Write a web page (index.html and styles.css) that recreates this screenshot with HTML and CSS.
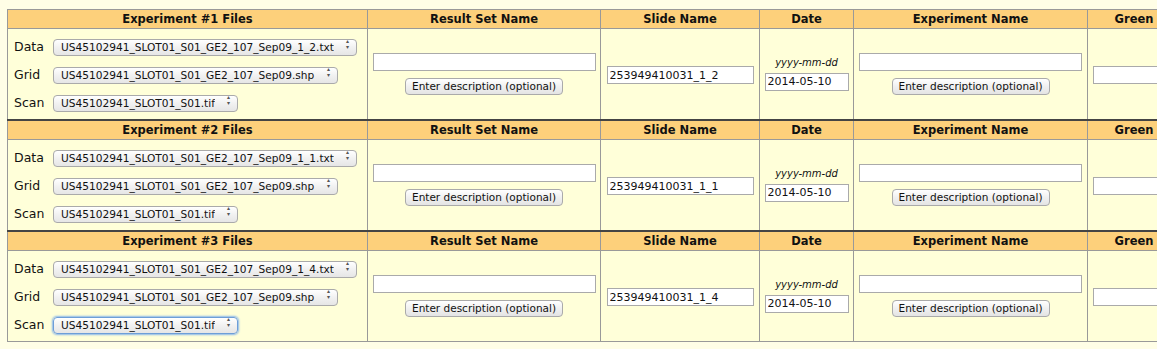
FILE: index.html
```html
<!DOCTYPE html>
<html lang="en">
<head>
  <meta charset="UTF-8">
  <title>Experiment Files</title>
  <link rel="stylesheet" href="styles.css">
</head>
<body>
  <table class="experiments">
    <colgroup>
      <col class="c-files">
      <col class="c-result">
      <col class="c-slide">
      <col class="c-date">
      <col class="c-name">
      <col class="c-green">
    </colgroup>

    <tbody class="group">
      <tr class="head">
        <th>Experiment #1 Files</th>
        <th>Result Set Name</th>
        <th>Slide Name</th>
        <th>Date</th>
        <th>Experiment Name</th>
        <th>Green</th>
      </tr>
      <tr class="body">
        <td class="files">
          <div class="file-row"><label>Data</label><span class="popup"><select><option>US45102941_SLOT01_S01_GE2_107_Sep09_1_2.txt</option></select></span></div>
          <div class="file-row"><label>Grid</label><span class="popup"><select><option>US45102941_SLOT01_S01_GE2_107_Sep09.shp</option></select></span></div>
          <div class="file-row"><label>Scan</label><span class="popup"><select><option>US45102941_SLOT01_S01.tif</option></select></span></div>
        </td>
        <td class="center">
          <input type="text" class="wide">
          <button>Enter description (optional)</button>
        </td>
        <td class="center"><input type="text" class="slide" value="253949410031_1_2"></td>
        <td class="center">
          <div class="hint">yyyy-mm-dd</div>
          <input type="text" class="date" value="2014-05-10">
        </td>
        <td class="center">
          <input type="text" class="wide">
          <button>Enter description (optional)</button>
        </td>
        <td class="green"><input type="text" class="date"></td>
      </tr>
    </tbody>

    <tbody class="group">
      <tr class="head">
        <th>Experiment #2 Files</th>
        <th>Result Set Name</th>
        <th>Slide Name</th>
        <th>Date</th>
        <th>Experiment Name</th>
        <th>Green</th>
      </tr>
      <tr class="body">
        <td class="files">
          <div class="file-row"><label>Data</label><span class="popup"><select><option>US45102941_SLOT01_S01_GE2_107_Sep09_1_1.txt</option></select></span></div>
          <div class="file-row"><label>Grid</label><span class="popup"><select><option>US45102941_SLOT01_S01_GE2_107_Sep09.shp</option></select></span></div>
          <div class="file-row"><label>Scan</label><span class="popup"><select><option>US45102941_SLOT01_S01.tif</option></select></span></div>
        </td>
        <td class="center">
          <input type="text" class="wide">
          <button>Enter description (optional)</button>
        </td>
        <td class="center"><input type="text" class="slide" value="253949410031_1_1"></td>
        <td class="center">
          <div class="hint">yyyy-mm-dd</div>
          <input type="text" class="date" value="2014-05-10">
        </td>
        <td class="center">
          <input type="text" class="wide">
          <button>Enter description (optional)</button>
        </td>
        <td class="green"><input type="text" class="date"></td>
      </tr>
    </tbody>

    <tbody class="group">
      <tr class="head">
        <th>Experiment #3 Files</th>
        <th>Result Set Name</th>
        <th>Slide Name</th>
        <th>Date</th>
        <th>Experiment Name</th>
        <th>Green</th>
      </tr>
      <tr class="body">
        <td class="files">
          <div class="file-row"><label>Data</label><span class="popup"><select><option>US45102941_SLOT01_S01_GE2_107_Sep09_1_4.txt</option></select></span></div>
          <div class="file-row"><label>Grid</label><span class="popup"><select><option>US45102941_SLOT01_S01_GE2_107_Sep09.shp</option></select></span></div>
          <div class="file-row"><label>Scan</label><span class="popup focused"><select><option>US45102941_SLOT01_S01.tif</option></select></span></div>
        </td>
        <td class="center">
          <input type="text" class="wide">
          <button>Enter description (optional)</button>
        </td>
        <td class="center"><input type="text" class="slide" value="253949410031_1_4"></td>
        <td class="center">
          <div class="hint">yyyy-mm-dd</div>
          <input type="text" class="date" value="2014-05-10">
        </td>
        <td class="center">
          <input type="text" class="wide">
          <button>Enter description (optional)</button>
        </td>
        <td class="green"><input type="text" class="date"></td>
      </tr>
    </tbody>
  </table>
</body>
</html>
```

FILE: styles.css
```css
body {
  margin: 0;
  padding: 9px 0 0 7px;
  background: #fffee6;
  font-family: "DejaVu Sans", sans-serif;
  color: #111;
  overflow: hidden;
}
.experiments {
  border-collapse: collapse;
  table-layout: fixed;
  width: 1173px;
  border: 1px solid #444;
}
.c-files { width: 360px; }
.c-result { width: 233px; }
.c-slide { width: 159px; }
.c-date { width: 94px; }
.c-name { width: 234px; }
.c-green { width: 93px; }

.group {
  border-top: 2px solid #444;
}
.group:first-of-type {
  border-top: 1px solid #444;
}
th, td {
  border: 1px solid #999;
  padding: 0;
}
.head th {
  background: #fdd07b;
  height: 18px;
  font-size: 11.5px;
  font-weight: bold;
  text-align: center;
  vertical-align: middle;
  white-space: nowrap;
}
.body td {
  background: #ffffd9;
  height: 90px;
  vertical-align: middle;
}
.center {
  text-align: center;
}
.green {
  padding-left: 5px;
}

.files {
  padding-left: 6px;
}
.file-row {
  display: flex;
  align-items: center;
  height: 28px;
}
.file-row label {
  width: 39px;
  font-size: 12.5px;
}
.popup {
  position: relative;
  display: inline-block;
}
.popup select {
  appearance: none;
  -webkit-appearance: none;
  box-sizing: border-box;
  font-family: "DejaVu Sans", sans-serif;
  font-size: 10.6px;
  line-height: 15px;
  color: #111;
  height: 17px;
  padding: 0 22px 0 7px;
  border: 1px solid #aaa;
  border-radius: 4px;
  background: linear-gradient(#ffffff, #f1f1f1 50%, #e6e6e6);
}
.popup::after {
  content: "\25B4\A\25BE";
  white-space: pre;
  position: absolute;
  right: 8px;
  top: 2px;
  font-size: 6px;
  line-height: 6px;
  color: #555;
  pointer-events: none;
}
.popup.focused select {
  border-color: #6d9ed8;
  box-shadow: 0 0 2px 1px #8ab6ea;
}

input[type="text"] {
  font-family: "DejaVu Sans", sans-serif;
  font-size: 11px;
  color: #111;
  height: 18px;
  padding: 0 2px;
  border: 1px solid #aaa;
  background: #fff;
  box-sizing: border-box;
}
input.wide {
  display: block;
  width: 223px;
  margin: 0 auto 4px;
}
input.slide {
  width: 147px;
}
input.date {
  width: 84px;
}
.hint {
  font-size: 10px;
  font-style: italic;
  margin: 0 0 2px;
}
button {
  font-family: "DejaVu Sans", sans-serif;
  font-size: 10.5px;
  color: #111;
  height: 17px;
  padding: 0 6px;
  border: 1px solid #aaa;
  border-radius: 4px;
  background: linear-gradient(#ffffff, #f0f0f0 50%, #e4e4e4);
}
```
